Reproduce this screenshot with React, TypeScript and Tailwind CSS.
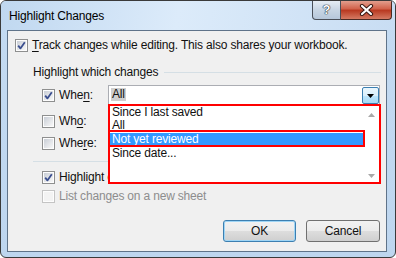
import React from "react";

function Box({ checked, disabled }: { checked?: boolean; disabled?: boolean }) {
  return (
    <svg width="13" height="13" viewBox="0 0 13 13" className="shrink-0">
      <defs>
        <linearGradient id="cbfill" x1="0" y1="0" x2="1" y2="1">
          <stop offset="0" stopColor="#c9ced6" />
          <stop offset="1" stopColor="#f8f8f8" />
        </linearGradient>
      </defs>
      <rect x="0.5" y="0.5" width="12" height="12" fill="#fdfdfd" stroke={disabled ? "#c4c4c4" : "#8e8f8f"} />
      <rect x="2" y="2" width="9" height="9" fill={disabled ? "#f3f3f3" : "url(#cbfill)"} />
      {checked && (
        <path d="M3.2 6.6 L5.4 9.4 L9.8 3.2" fill="none" stroke="#3b4f8f" strokeWidth="1.8" strokeLinejoin="round" />
      )}
    </svg>
  );
}

function U({ children }: { children: React.ReactNode }) {
  return <span className="underline underline-offset-[2px] decoration-1">{children}</span>;
}

export default function App() {
  return (
    <div className="w-[396px] h-[258px] overflow-hidden rounded-[6px] border border-[#3a3a3a] bg-[linear-gradient(180deg,#c4dbf2,#bed6ef)] font-['Segoe_UI','Liberation_Sans',sans-serif] text-[12px] leading-[15px] tracking-[-0.18px] text-[#111]">
      {/* title bar */}
      <div className="flex h-[29px] items-start justify-between bg-[linear-gradient(100deg,#c0d8f0,#dcebfa_45%,#c8ddf3)]">
        <div className="pl-[8px] pt-[8px] text-[12px] text-black">Highlight Changes</div>
        <div className="mr-[3px] flex -mt-px">
          <div className="flex h-[20px] w-[29px] items-center justify-center rounded-bl-[4px] border border-t-0 border-[#4a4f58] bg-[linear-gradient(180deg,#e9eff6,#c9d6e4_50%,#b6c7da)] text-[13px] font-bold text-white [text-shadow:0_0_1px_#1c2530,0_0_1px_#1c2530,0_0_1px_#1c2530]">
            ?
          </div>
          <div className="flex h-[20px] w-[51px] items-center justify-center rounded-br-[4px] border border-l-0 border-t-0 border-[#4a2a24] bg-[linear-gradient(180deg,#e5a696,#d2644d_45%,#b93a22_55%,#d57a63)]">
            <svg width="15" height="12" viewBox="0 0 15 12">
              <path d="M3 2 L12 10 M12 2 L3 10" stroke="#3a1a14" strokeWidth="4.2" strokeLinecap="round" />
              <path d="M3 2 L12 10 M12 2 L3 10" stroke="#ffffff" strokeWidth="2.2" strokeLinecap="round" />
            </svg>
          </div>
        </div>
      </div>

      {/* client area */}
      <div className="relative ml-[6px] mr-[8px] h-[222px] border border-[#5f7389] bg-[#f0f0f0]">
        <div className="mt-[6px] ml-[7px] flex h-[17px] items-center gap-[4px]">
          <Box checked />
          <span>
            <U>T</U>rack changes while editing. This also shares your workbook.
          </span>
        </div>

        <div className="mt-[11px] ml-[25px] mr-[5px] flex h-[15px] items-center gap-[6px]">
          <span>Highlight which changes</span>
          <div className="h-px flex-1 bg-[#d5dfe5]" />
        </div>

        <div className="mt-[5px] ml-[34px] flex h-[20px] items-center">
          <Box checked />
          <span className="ml-[4px] w-[49px]">
            Whe<U>n</U>:
          </span>
          <div className="relative h-[20px] w-[272px] border border-[#abadb3] bg-white">
            <span className="ml-[2px] mt-[2px] inline-block bg-[#cfcfcf] px-px leading-[13px]">All</span>
            <div className="absolute right-0 top-px flex h-[17px] w-[17px] items-center justify-center rounded-[2px] border border-[#3c7fb1] bg-[linear-gradient(180deg,#eaf6fd,#d9effc_50%,#bee6fd_51%,#a7d9f5)]">
              <svg width="7" height="4" viewBox="0 0 7 4">
                <path d="M0 0 H7 L3.5 4 Z" fill="#000" />
              </svg>
            </div>
          </div>
        </div>

        <div className="mt-[7px] ml-[34px] flex h-[19px] items-center">
          <Box />
          <span className="ml-[4px]">
            Wh<U>o</U>:
          </span>
        </div>

        <div className="mt-[3px] ml-[34px] flex h-[19px] items-center">
          <Box />
          <span className="ml-[4px]">
            Whe<U>r</U>e:
          </span>
        </div>

        <div className="mt-[8px] ml-[25px] mr-[5px] h-px bg-[#d5dfe5]" />

        <div className="mt-[6px] ml-[34px] flex h-[19px] items-center">
          <Box checked />
          <span className="ml-[4px]">Highlight changes on <U>s</U>creen</span>
        </div>

        <div className="ml-[34px] flex h-[19px] items-center">
          <Box disabled />
          <span className="ml-[4px] text-[#8d8d8d]">List changes on a new sheet</span>
        </div>

        <div className="mt-[14px] mr-[6px] flex justify-end gap-[10px]">
          <div className="flex h-[22px] w-[73px] items-center justify-center rounded-[3px] border border-[#3c7fb1] bg-[linear-gradient(180deg,#f2f2f2,#ebebeb_50%,#dddddd_51%,#cfcfcf)] shadow-[inset_0_0_0_1px_#9fd5f5]">
            OK
          </div>
          <div className="flex h-[22px] w-[74px] items-center justify-center rounded-[3px] border border-[#707070] bg-[linear-gradient(180deg,#f2f2f2,#ebebeb_50%,#dddddd_51%,#cfcfcf)]">
            Cancel
          </div>
        </div>

        {/* dropdown list overlay */}
        <div className="absolute left-[100px] top-[73px] h-[80px] w-[273px] border-2 border-[#ff0000] bg-white">
          <div className="flex h-full">
            <div className="relative flex-1 leading-[13px]">
              <div className="pl-[2px]">Since I last saved</div>
              <div className="pl-[2px]">All</div>
              <div className="mt-[1px] bg-[#3399ff] pl-[2px] leading-[13px] text-white">Not yet reviewed</div>
              <div className="mt-[1px] pl-[2px]">Since date...</div>
              <div className="absolute left-[-2px] right-[-1px] top-[24px] h-[17px] border-2 border-[#ff0000]" />
            </div>
            <div className="flex w-[15px] flex-col items-center justify-between pt-[7px] pb-[4px]">
              <svg width="7" height="4" viewBox="0 0 7 4">
                <path d="M0 4 H7 L3.5 0 Z" fill="#a8a8a8" />
              </svg>
              <svg width="7" height="4" viewBox="0 0 7 4">
                <path d="M0 0 H7 L3.5 4 Z" fill="#a8a8a8" />
              </svg>
            </div>
          </div>
        </div>
      </div>
    </div>
  );
}
